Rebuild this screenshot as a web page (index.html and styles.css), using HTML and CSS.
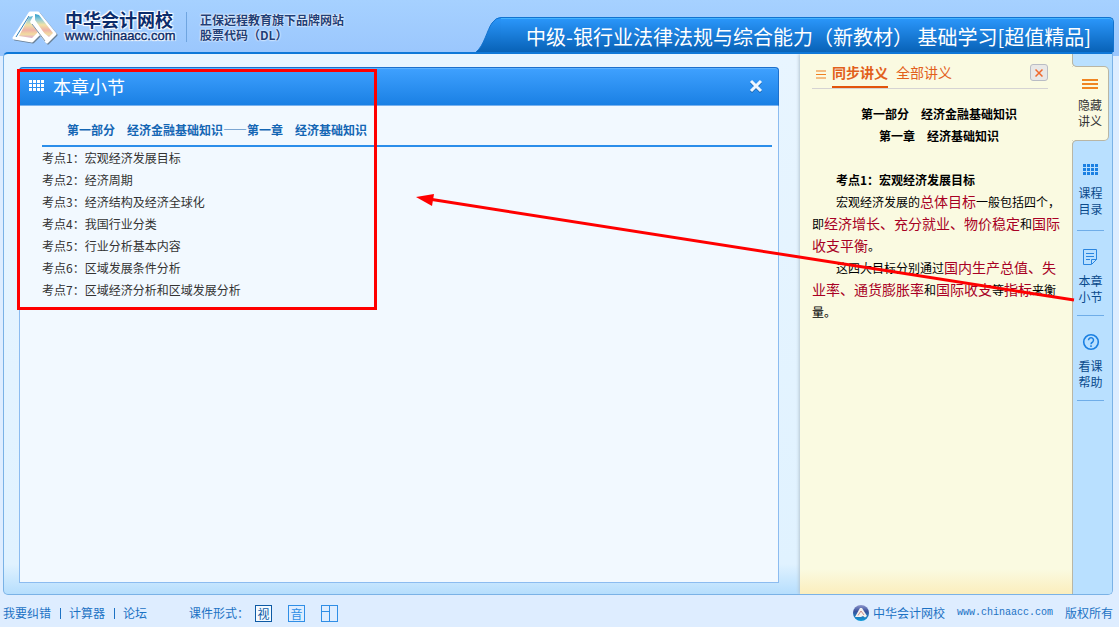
FILE: index.html
```html
<!DOCTYPE html>
<html lang="zh-CN">
<head>
  <meta charset="utf-8">
  <meta name="viewport" content="width=device-width, initial-scale=1.0">
  <title>中华会计网校</title>
  <link rel="stylesheet" href="styles.css">
</head>
<body>
  <header class="header">
    <a class="brand" href="#">
      <svg class="logo" width="46" height="36" viewBox="0 0 46 36" stroke-linejoin="round">
        <defs>
          <linearGradient id="rainbow" gradientUnits="userSpaceOnUse" x1="0" y1="4" x2="0" y2="31">
            <stop offset="0" stop-color="#2c9ccb"/>
            <stop offset="0.2" stop-color="#8fcbd8"/>
            <stop offset="0.4" stop-color="#f1e2a6"/>
            <stop offset="0.6" stop-color="#efb3a8"/>
            <stop offset="0.75" stop-color="#f2dca0"/>
            <stop offset="0.9" stop-color="#dca6d4"/>
            <stop offset="1" stop-color="#8fb3e0"/>
          </linearGradient>
        </defs>
        <path d="M19 4 3 29 21 32 29 24 36 33 44 25 27 4Z" fill="#6a8096" stroke="#6a8096" stroke-width="3"/>
        <path d="M18 3 2 28 20 31 28 23 35 32 43 24 26 3Z" fill="#fff" stroke="#fff" stroke-width="3"/>
        <path d="M17 7 21 6 18 12 26 22 20 28 7 26Z" fill="url(#rainbow)"/>
        <path d="M17 6 4 27" stroke="#2f7fb8" stroke-width="1"/>
        <path d="M23 4 27 5 41 23 37 27 32 23 23 10Z" fill="url(#rainbow)"/>
        <path d="M21 11 35 30" stroke="#fff" stroke-width="3"/>
        <path d="M20 14 33 31" stroke="#7c93aa" stroke-width="1"/>
      </svg>
      <span class="brand-text">
        <strong>中华会计网校</strong>
        <span>www.chinaacc.com</span>
      </span>
    </a>
    <p class="slogan">正保远程教育旗下品牌网站<br>股票代码（DL）</p>
    <div class="course">
      <svg class="course-edge" width="25" height="35" viewBox="0 0 25 35">
        <defs>
          <linearGradient id="edge" x1="0" y1="0" x2="0" y2="1">
            <stop offset="0" stop-color="#2b97fb"/>
            <stop offset="1" stop-color="#0862b7"/>
          </linearGradient>
        </defs>
        <path d="M0 35C8 29 11 13 16 6Q20 0 25 0V35Z" fill="url(#edge)"/>
        <path d="M0 35C8 29 11 13 16 6Q20 0.5 25 0.5" fill="none" stroke="#1273cf"/>
      </svg>
      <h1>中级-银行业法律法规与综合能力（新教材） 基础学习[超值精品]</h1>
    </div>
  </header>

  <main class="frame">
    <div class="stage">
      <section class="panel">
        <div class="panel-head">
          <svg width="15" height="12" viewBox="0 0 15 12" fill="#fff">
            <path d="M0 0h3v3h-3zM4 0h3v3h-3zM8 0h3v3h-3zM12 0h3v3h-3zM0 4h3v3h-3zM4 4h3v3h-3zM8 4h3v3h-3zM12 4h3v3h-3zM0 8h3v3h-3zM4 8h3v3h-3zM8 8h3v3h-3zM12 8h3v3h-3z"/>
          </svg>
          <h2>本章小节</h2>
          <button class="panel-close" type="button" aria-label="关闭">
            <svg width="14" height="14" viewBox="0 0 14 14">
              <path d="M2 3 12 13M12 3 2 13" stroke="#1763ae" stroke-width="3"/>
              <path d="M2 2 12 12M12 2 2 12" stroke="#eef6ff" stroke-width="3"/>
            </svg>
          </button>
        </div>
        <div class="panel-body">
          <h3>第一部分　经济金融基础知识——第一章　经济基础知识</h3>
          <ul>
            <li>考点1：宏观经济发展目标</li>
            <li>考点2：经济周期</li>
            <li>考点3：经济结构及经济全球化</li>
            <li>考点4：我国行业分类</li>
            <li>考点5：行业分析基本内容</li>
            <li>考点6：区域发展条件分析</li>
            <li>考点7：区域经济分析和区域发展分析</li>
          </ul>
        </div>
      </section>
    </div>

    <aside class="lecture">
      <div class="lecture-head">
        <svg width="10" height="9" viewBox="0 0 10 9"><path d="M0 1h10M0 4.500h10M0 8h10" stroke="#f08020"/></svg>
        <a class="active" href="#">同步讲义</a>
        <a href="#">全部讲义</a>
        <button class="lecture-close" type="button" aria-label="关闭讲义">
          <svg width="8" height="8" viewBox="0 0 8 8"><path d="M0.500 0.500l7 7M7.500 0.500l-7 7" stroke="#f0692c" stroke-width="1.500"/></svg>
        </button>
      </div>
      <div class="lecture-text">
        <h4>第一部分　经济金融基础知识</h4>
        <h4>第一章　经济基础知识</h4>
        <h5>考点1：宏观经济发展目标</h5>
        <p>宏观经济发展的<em>总体目标</em>一般包括四个，即<em>经济增长、充分就业、物价稳定</em>和<em>国际收支平衡</em>。</p>
        <p>这四大目标分别通过<em>国内生产总值、失业率、通货膨胀率</em>和<em>国际收支</em>等<em>指标</em>来衡量。</p>
      </div>
    </aside>

    <nav class="side">
      <button class="side-item current" type="button">
        <svg width="18" height="18" viewBox="0 0 18 18"><path d="M1 5h16M1 9h16M1 13h16" stroke="#f08522" stroke-width="2"/></svg>
        <span>隐藏<br>讲义</span>
      </button>
      <button class="side-item catalog" type="button">
        <svg width="18" height="18" viewBox="0 0 18 18" fill="#1b80e2">
          <path d="M1 4h3v3h-3zM5 4h3v3h-3zM9 4h3v3h-3zM13 4h3v3h-3zM1 8h3v3h-3zM5 8h3v3h-3zM9 8h3v3h-3zM13 8h3v3h-3zM1 12h3v3h-3zM5 12h3v3h-3zM9 12h3v3h-3zM13 12h3v3h-3z"/>
        </svg>
        <span>课程<br>目录</span>
      </button>
      <button class="side-item" type="button">
        <svg width="18" height="18" viewBox="0 0 18 18" fill="none" stroke="#2a86e0">
          <path d="M1.500 1.500h13v10l-5 5h-8zM9.500 16v-4.500h5M4 5.500h8M4 8.500h8M4 11.500h4"/>
        </svg>
        <span>本章<br>小节</span>
      </button>
      <button class="side-item" type="button">
        <svg width="18" height="18" viewBox="0 0 18 18" fill="none" stroke="#1b80e2">
          <circle cx="9" cy="9" r="7.300" stroke-width="1.600"/>
          <path d="M6.500 7.200a2.500 2.500 0 1 1 4.200 1.800q-1.700 1-1.700 2.200M9 12.300v1.700" stroke-width="1.500"/>
        </svg>
        <span>看课<br>帮助</span>
      </button>
    </nav>
  </main>

  <footer class="footer">
    <ul class="links">
      <li><a href="#">我要纠错</a></li>
      <li><a href="#">计算器</a></li>
      <li><a href="#">论坛</a></li>
    </ul>
    <div class="modes">
      <span>课件形式：</span>
      <button class="mode on" type="button">视</button>
      <button class="mode" type="button">音</button>
      <button class="mode" type="button" aria-label="分屏">
        <svg width="15" height="15" viewBox="0 0 15 15"><path d="M7.500 0v15M0 5.500h7" stroke="#2f8ee6"/></svg>
      </button>
    </div>
    <div class="copyright">
      <svg width="16" height="16" viewBox="0 0 16 16">
        <defs>
          <linearGradient id="ball" x1="0" y1="0" x2="0" y2="1">
            <stop offset="0" stop-color="#8d95cc"/>
            <stop offset="0.4" stop-color="#38519c"/>
            <stop offset="1" stop-color="#0b9bd8"/>
          </linearGradient>
        </defs>
        <circle cx="8" cy="8" r="8" fill="url(#ball)"/>
        <path d="M7 3h2l5 8-2 1.500L10 11l-2 1H2Z" fill="#f4f1ee"/>
        <path d="M8 6 5 10.500M8 6l3 4" stroke="#c98a86" stroke-width="1"/>
      </svg>
      <span>中华会计网校</span>
      <a class="site" href="#">www.chinaacc.com</a>
      <span>版权所有</span>
    </div>
  </footer>

  <!-- red frame and arrow that point out the section list -->
  <svg class="callout" width="1080" height="320" viewBox="0 0 1080 320">
    <rect x="18.500" y="70.500" width="357" height="238" fill="none" stroke="#f00" stroke-width="3"/>
    <path d="M432 199.500 1074 300" stroke="#f00" stroke-width="3"/>
    <path d="M416 197 434 194 432 206Z" fill="#f00"/>
  </svg>
</body>
</html>
```
FILE: styles.css
```css
* {
  box-sizing: border-box;
}

body {
  position: relative;
  display: flex;
  flex-direction: column;
  min-height: 100vh;
  margin: 0;
  font: 12px/22px "Noto Sans CJK SC", sans-serif;
  color: #333;
  background: #deedff linear-gradient(#a6d1ff, #9ac6fd) no-repeat 0 0 / 100% 56px;
}

h1, h2, h3, h4, h5, p, ul {
  margin: 0;
  padding: 0;
}

ul {
  list-style: none;
}

a {
  color: inherit;
  text-decoration: none;
}

button {
  margin: 0;
  padding: 0;
  border: none;
  background: none;
  font: inherit;
  color: inherit;
  cursor: pointer;
}

svg {
  display: block;
  flex: none;
}

/* header */
.header {
  display: flex;
  align-items: flex-start;
  height: 52px;
  padding: 0 5px 0 12px;
}

.brand {
  display: flex;
  gap: 7px;
  padding-top: 10px;
  color: #0b2c6b;
  text-shadow: 1px 1px 1px #fff, -1px -1px 1px #fff, 1px -1px 1px #fff, -1px 1px 1px #fff;
}

.brand-text {
  display: flex;
  flex-direction: column;
  width: 110px;
  font: 13px/16px "Liberation Sans", sans-serif;
  -webkit-text-stroke: 0.4px #0b2c6b;
}

.brand-text strong {
  font: bold 18px/18px "Noto Sans CJK SC", sans-serif;
  -webkit-text-stroke: 0;
}

.slogan {
  margin: 12px 0 0 11px;
  padding-left: 13px;
  border-left: 1px solid #6fa5e0;
  font-weight: bold;
  line-height: 15px;
  white-space: nowrap;
  color: #1f3f78;
  text-shadow: 0 0 2px #fff, 0 0 2px #fff;
}

.course {
  display: flex;
  margin: 17px 0 0 auto;
}

.course h1 {
  height: 35px;
  padding: 0 22px 0 25px;
  border-top: 1px solid #1273cf;
  border-right: 1px solid #1273cf;
  border-radius: 0 5px 0 0;
  background: linear-gradient(#2b97fb, #0862b7);
  box-shadow: inset 0 1px #43b4ff;
  font-size: 20px;
  font-weight: normal;
  line-height: 38px;
  white-space: nowrap;
  color: #fff;
}

/* main frame */
.frame {
  flex: 1;
  display: flex;
  margin: 0 6px 0 3px;
  border: 1px solid #7ab2e6;
  border-top: 2px solid #0f78d8;
  border-radius: 5px 0 5px 5px;
  background: linear-gradient(#e8f5ff, #e0f2ff calc(100% - 30px), #b6defd);
  overflow: hidden;
}

.stage {
  flex: 1;
  display: flex;
  padding: 13px 21px 11px 15px;
}

.panel {
  flex: 1;
  display: flex;
  flex-direction: column;
  border: 1px solid #8cbcf0;
  border-top: none;
  border-radius: 4px 4px 0 0;
  background: #f2f9ff;
}

.panel-head {
  display: flex;
  align-items: center;
  gap: 9px;
  height: 39px;
  margin: 0 -1px;
  padding: 0 15px 2px 9px;
  border: 1px solid #1c6fcc;
  border-bottom-color: #7ab2ee;
  border-radius: 4px 4px 0 0;
  background: linear-gradient(#3fa1ff, #1a80e4);
  box-shadow: inset 0 1px #5bb2ff;
  color: #fff;
}

.panel-head h2 {
  font-size: 18px;
  font-weight: normal;
}

.panel-close {
  margin-left: auto;
}

.panel-body {
  padding: 13px 6px 0 22px;
}

.panel-body h3 {
  padding: 0 0 4px 25px;
  border-bottom: 2px solid #2b8eea;
  font-size: 12px;
  color: #1466b4;
}

/* lecture notes */
.lecture {
  width: 273px;
  padding: 0 6px 0 12px;
  border-right: 1px solid #b9b6a4;
  background: linear-gradient(#fafae1 calc(100% - 25px), #fbeebd);
  box-shadow: -1px 0 3px #b4c4d0;
}

.lecture-head {
  display: flex;
  align-items: center;
  gap: 8px;
  height: 35px;
  margin-right: 18px;
  padding-left: 4px;
  border-bottom: 1px solid #d5d3d3;
  font-size: 14px;
  color: #e2601c;
}

.lecture-head svg {
  margin-top: 6px;
}

.lecture-head a {
  height: 34px;
  line-height: 36px;
}

.lecture-head .active {
  margin-left: -2px;
  border-bottom: 2px solid #e2540c;
  font-weight: bold;
}

.lecture-close {
  display: grid;
  place-items: center;
  width: 18px;
  height: 17px;
  margin: 3px 0 0 auto;
  border: 1px solid #b9bcc4;
  border-radius: 3px;
  background: #e9e8e6;
}

.lecture-close svg {
  margin: 0;
}

.lecture-text {
  padding-top: 14px;
  color: #000;
}

.lecture-text h4,
.lecture-text h5 {
  font-size: 12px;
}

.lecture-text h4 {
  text-align: center;
}

.lecture-text h5 {
  margin-top: 22px;
}

.lecture-text h5,
.lecture-text p {
  text-indent: 24px;
}

.lecture-text em {
  font-size: 14px;
  font-style: normal;
  line-height: 1;
  color: #a80024;
}

/* side buttons */
.side {
  width: 39px;
  padding-top: 12px;
  background: #b9e0ff;
}

.side-item {
  display: flex;
  flex-direction: column;
  align-items: center;
  gap: 7px;
  width: 27px;
  margin-left: 4px;
  padding: 17px 0 10px;
  border-bottom: 1px solid #6fade8;
  line-height: 16px;
  color: #0a4a8c;
}

.side-item.catalog {
  padding-bottom: 13px;
}

.side-item.current {
  position: relative;
  gap: 4px;
  width: 37px;
  margin: 0 0 2px -1px;
  padding: 8px 0 11px;
  border: 1px solid #b9b6a4;
  border-left: none;
  border-radius: 0 5px 5px 0;
  background: #fafae1;
  color: #333;
}

/* rounded joints between the open tab and the lecture's edge */
.side-item.current::before,
.side-item.current::after {
  content: "";
  position: absolute;
  left: 0;
  width: 5px;
  height: 5px;
  border-left: 1px solid #b9b6a4;
}

.side-item.current::before {
  bottom: 100%;
  border-bottom: 1px solid #b9b6a4;
  border-bottom-left-radius: 5px;
  box-shadow: -1px 1px #fafae1;
}

.side-item.current::after {
  top: 100%;
  border-top: 1px solid #b9b6a4;
  border-top-left-radius: 5px;
  box-shadow: -1px -1px #fafae1;
}

/* footer */
.footer {
  display: flex;
  align-items: center;
  height: 32px;
  padding: 4px 6px 0 3px;
  white-space: nowrap;
  color: #1c72c4;
}

.links {
  display: flex;
}

.links li + li::before {
  content: "";
  display: inline-block;
  width: 1px;
  height: 11px;
  margin: 0 8px 0 9px;
  vertical-align: -1px;
  background: #1c72c4;
}

.modes {
  display: flex;
  align-items: center;
  gap: 16px;
  margin-left: 42px;
}

.modes span {
  margin-right: -10px;
}

.mode {
  width: 17px;
  height: 17px;
  border: 1px solid #2f8ee6;
  line-height: 15px;
  color: #2f8ee6;
}

.mode.on {
  border-color: #0d5aa5;
  background: #f4faff;
  color: #0d5aa5;
}

.copyright {
  display: flex;
  align-items: center;
  gap: 4px;
  margin-left: auto;
}

.site {
  margin: 0 8px;
  font: 10px/22px "Liberation Mono", monospace;
}

.callout {
  position: absolute;
  top: 0;
  left: 0;
  pointer-events: none;
}
```
